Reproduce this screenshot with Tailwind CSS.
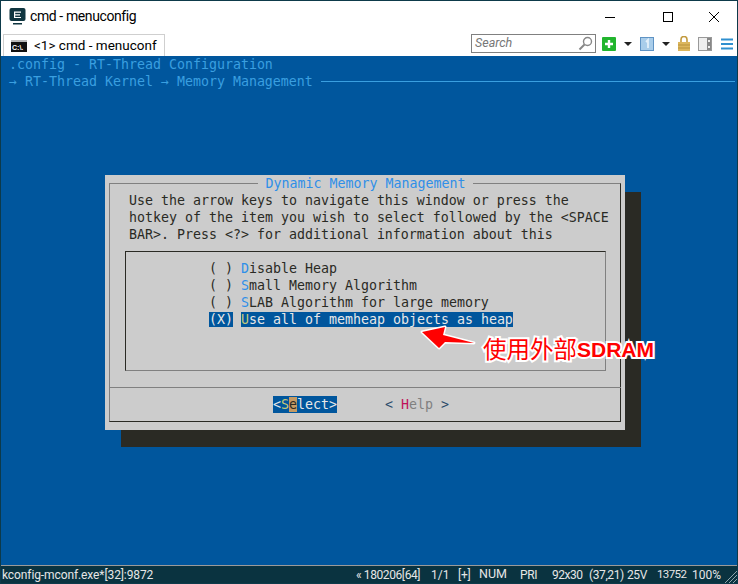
<!DOCTYPE html>
<html lang="en">
<head>
  <meta charset="UTF-8">
  <title>cmd - menuconfig</title>
  <script src="https://cdn.jsdelivr.net/npm/@tailwindcss/browser@4"></script>
</head>
<body class="w-[738px] h-[584px] overflow-hidden bg-white">
  <div class="w-[738px] h-[584px] flex flex-col border border-[#0d3a4a] font-['Roboto','Open_Sans',sans-serif]">
    <!-- Title bar -->
    <header class="h-[32px] flex items-center bg-white shrink-0">
      <svg class="ml-[8px] mb-[2px] w-[17px] h-[17px]" viewBox="0 0 17 17">
        <rect x="0.500" y="0" width="16" height="13" rx="2" fill="#0f3540"/>
        <rect x="4" y="15" width="9" height="1.500" fill="#0f3540"/>
        <path d="M5 3.500h7v1.200H6.200v1.600H11v1.200H6.200v1.400H12v1.200H5z" fill="#fff"/>
      </svg>
      <span class="ml-[4px] mb-[2px] text-[14px] tracking-[-0.4px] text-black leading-none">cmd - menuconfig</span>
      <div class="ml-auto flex items-center">
        <svg class="w-[46px] h-[30px]" viewBox="0 0 46 30"><path d="M6 15.500h10" stroke="#000" stroke-width="1"/></svg>
        <svg class="w-[46px] h-[30px]" viewBox="0 0 46 30"><rect x="18.500" y="10.500" width="9" height="9" fill="none" stroke="#000"/></svg>
        <svg class="w-[46px] h-[30px]" viewBox="0 0 46 30"><path d="M18 10l10 10M28 10l-10 10" stroke="#000" stroke-width="1"/></svg>
      </div>
    </header>
    <!-- Tab bar -->
    <div class="h-[23px] flex items-end bg-white shrink-0 relative">
      <div class="ml-[2px] w-[162px] h-[22px] border border-b-0 border-[#cfcfcf] flex items-center bg-white">
        <svg class="ml-[7px] w-[16px] h-[12px]" viewBox="0 0 16 12">
          <rect width="16" height="12" fill="#111"/>
          <rect width="16" height="2" fill="#b9b9b9"/>
          <text x="1" y="10" font-size="7" font-weight="700" fill="#fff" font-family="Liberation Sans">C:\.</text>
        </svg>
        <span class="ml-[7px] text-[13.5px] leading-none text-black whitespace-nowrap">&lt;1&gt; cmd - menuconf</span>
      </div>
      <div class="ml-auto mb-[3px] flex items-center pr-[4px]">
        <div class="w-[125px] h-[19px] border border-[#808080] flex items-center justify-between bg-white">
          <span class="ml-[3px] text-[12.5px] italic text-[#777] leading-none">Search</span>
          <svg class="mr-[2px] w-[15px] h-[15px]" viewBox="0 0 15 15"><circle cx="9.500" cy="5.500" r="4" fill="none" stroke="#888" stroke-width="1.400"/><path d="M6.500 8.500L1.500 13.500" stroke="#888" stroke-width="2"/></svg>
        </div>
        <svg class="ml-[6px] w-[14px] h-[14px]" viewBox="0 0 14 14"><rect width="14" height="14" rx="1" fill="#22b52e"/><path d="M7 3v8M3 7h8" stroke="#fff" stroke-width="2.400"/></svg>
        <svg class="ml-[8px] w-[8px] h-[4px]" viewBox="0 0 8 4"><path d="M0 0h8L4 4z" fill="#222"/></svg>
        <svg class="ml-[8px] w-[14px] h-[14px]" viewBox="0 0 14 14"><rect x="0.500" y="0.500" width="13" height="13" fill="#a9cdea" stroke="#5f93c4"/><path d="M6 5l2-2v8" stroke="#e4f0fa" stroke-width="1.800" fill="none"/></svg>
        <svg class="ml-[8px] w-[8px] h-[4px]" viewBox="0 0 8 4"><path d="M0 0h8L4 4z" fill="#222"/></svg>
        <svg class="ml-[8px] w-[12px] h-[15px]" viewBox="0 0 12 15"><path d="M3 6V3.500a3 3 0 016 0V6" fill="none" stroke="#c29a3e" stroke-width="1.600"/><rect y="6" width="12" height="9" fill="#dcb65c"/><path d="M0 9h12M0 12h12" stroke="#b8923b"/></svg>
        <svg class="ml-[8px] w-[14px] h-[14px]" viewBox="0 0 14 14"><rect x="0.500" y="0.500" width="13" height="13" fill="#eee" stroke="#999"/><rect x="9" y="1" width="4" height="12" fill="#888"/><rect x="10" y="3" width="2" height="2" fill="#eee"/><rect x="10" y="9" width="2" height="2" fill="#eee"/></svg>
        <svg class="ml-[9px] w-[12px] h-[12px]" viewBox="0 0 12 12"><path d="M0 1.500h12M0 6h12M0 10.500h12" stroke="#2f8fcf" stroke-width="2"/></svg>
      </div>
    </div>
    <!-- Terminal -->
    <main class="relative flex-1 bg-[#00569d] font-['DejaVu_Sans_Mono',monospace] text-[13.29px] leading-[17px] text-[#cccccc] overflow-hidden">
      <div class="h-[17px] pl-[8px] whitespace-pre text-[#3a9fe0]">.config - RT-Thread Configuration</div>
      <div class="h-[17px] pl-[8px] flex items-center text-[#3a9fe0]">
        <span class="whitespace-pre">→ RT-Thread Kernel → Memory Management </span>
        <span class="flex-1 h-px bg-[#3a9fe0] mr-[2px]"></span>
      </div>

      <!-- Dialog shadow -->
      <div class="absolute left-[120px] top-[136px] w-[520px] h-[255px] bg-[#2a2a24]"></div>

      <!-- Dialog -->
      <section class="absolute left-[104px] top-[119px] w-[520px] h-[255px] bg-[#cccccc] text-[#2a2a24]">
        <div class="absolute left-[4px] top-[8px] w-[512px] h-[239px] border border-[#808080] border-r-[#2a2a24] border-b-[#2a2a24]"></div>
        <div class="relative">
          <div class="h-[17px] text-center whitespace-pre"><span class="bg-[#cccccc] text-[#2f8fe8] px-[8px] ml-[1px]">Dynamic Memory Management</span></div>
          <div class="pl-[24px]">
            <div class="h-[17px] whitespace-pre">Use the arrow keys to navigate this window or press the</div>
            <div class="h-[17px] whitespace-pre">hotkey of the item you wish to select followed by the &lt;SPACE</div>
            <div class="h-[17px] whitespace-pre">BAR&gt;. Press &lt;?&gt; for additional information about this</div>
          </div>
          <!-- Option list -->
          <div class="mt-[8px] ml-[20px] w-[481px] h-[120px] border border-[#2a2a24] border-r-[#808080] border-b-[#808080] pt-[8px] pl-[83px]">
            <div class="h-[17px] whitespace-pre">( ) <span class="text-[#2f8fe8]">D</span>isable Heap</div>
            <div class="h-[17px] whitespace-pre">( ) <span class="text-[#2f8fe8]">S</span>mall Memory Algorithm</div>
            <div class="h-[17px] whitespace-pre">( ) <span class="text-[#2f8fe8]">S</span>LAB Algorithm for large memory</div>
            <div class="h-[17px] whitespace-pre text-[#e8e8e8]"><span class="bg-[#00569d]">(X)</span> <span class="bg-[#00569d]"><span class="text-[#c4c97a]">U</span>se all of memheap objects as heap</span></div>
          </div>
          <!-- Button row -->
          <div class="mt-[16px] ml-[4px] w-[512px] h-px bg-[#808080]"></div>
          <div class="mt-[8px] h-[17px] pl-[168px] flex">
            <span class="whitespace-pre bg-[#00569d] text-[#e8e8e8]">&lt;<span class="text-[#c4c97a]">S</span><span class="bg-[#c49a63] text-[#2a2a24]">e</span>lect&gt;</span>
            <span class="whitespace-pre ml-[48px] text-[#2a4a6a]">&lt; <span class="text-[#c0105a]">H</span><span class="text-[#808080]">elp</span> &gt;</span>
          </div>
        </div>
      </section>

      <!-- Annotation arrow -->
      <svg class="absolute left-[414px] top-[265px] w-[70px] h-[40px]" viewBox="0 0 70 40">
        <path d="M7 11L30 6L28 14L59 22L30 21L24 27Z" fill="#ff0000" stroke="#fff" stroke-width="3" stroke-linejoin="round" paint-order="stroke"/>
      </svg>
      <div class="absolute left-[482px] top-[278px] h-[30px] flex items-center font-['Noto_Sans_CJK_SC',sans-serif] text-[23.5px] leading-none text-[#ff0000] font-normal [-webkit-text-stroke:4px_#fff] [paint-order:stroke_fill]">使用外部<span class="font-['Liberation_Sans',sans-serif] font-bold text-[21px]">SDRAM</span></div>
    </main>
    <!-- Status bar -->
    <footer class="h-[18px] shrink-0 bg-[#0a3340] border-t border-[#9a9a9a] text-[#e6e6e6] text-[12px] leading-none flex items-center relative whitespace-nowrap">
      <span class="ml-[1px] tracking-[-0.1px]">kconfig-mconf.exe*[32]:9872</span>
      <div class="ml-auto flex items-center mr-[18px]">
        <span class="w-[64px] tracking-[-0.4px]">« 180206[64]</span>
        <span class="ml-[11px] w-[15px]">1/1</span>
        <span class="ml-[12px] w-[14px] tracking-[-0.2px]">[+]</span>
        <span class="ml-[7px] w-[28px] text-[12.5px]">NUM</span>
        <span class="ml-[13px] w-[17px] tracking-[-0.3px]">PRI</span>
        <span class="ml-[15px] w-[28px] tracking-[-0.5px]">92x30</span>
        <span class="ml-[9px] w-[35px] tracking-[-0.4px]">(37,21)</span>
        <span class="ml-[3px] w-[19px] tracking-[-0.4px]">25V</span>
        <span class="ml-[11px] w-[29px] text-[11.5px] tracking-[-0.6px]">13752</span>
        <span class="ml-[6px] w-[27px]">100%</span>
      </div>
      <svg class="absolute right-0 bottom-0 w-[14px] h-[14px]" viewBox="0 0 14 14"><path d="M14 2L2 14M14 6L6 14M14 10L10 14" stroke="#8fa5ac" stroke-width="1"/></svg>
    </footer>
  </div>
</body>
</html>
